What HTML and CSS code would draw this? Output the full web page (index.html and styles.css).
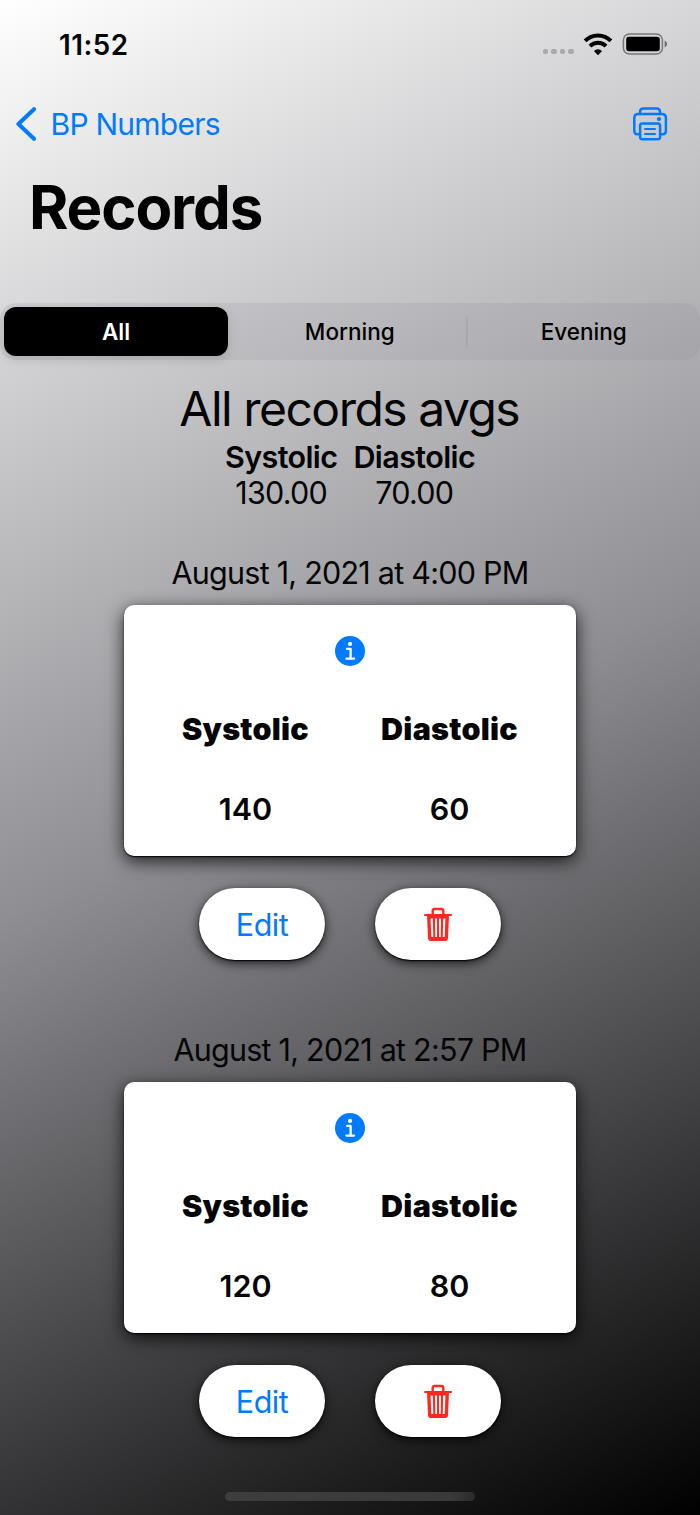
FILE: index.html
```html
<!DOCTYPE html>
<html lang="en">
<head>
<meta charset="utf-8">
<title>Records</title>
<link rel="stylesheet" href="styles.css">
</head>
<body>
<svg class="defs" width="0" height="0" aria-hidden="true">
  <symbol id="trash" viewBox="0 0 30 36">
    <path d="M2 9H28" fill="none" stroke="currentColor" stroke-width="2.2" stroke-linecap="round"/>
    <path d="M9.7 8.5V4.8Q9.7 3 11.6 3H18.4Q20.3 3 20.3 4.8V8.5" fill="none" stroke="currentColor" stroke-width="2.4"/>
    <path fill-rule="evenodd" fill="currentColor" d="M4 9H26L25 32Q24.9 35 22.2 35H7.8Q5.1 35 5 32ZM7.6 12.6L8.3 31H10.3L9.8 12.6ZM12 12.6L12.3 31H14V12.6ZM16 12.6V31H17.7L18 12.6ZM20.2 12.6L19.7 31H21.7L22.4 12.6Z"/>
  </symbol>
  <symbol id="info" viewBox="0 0 30 30">
    <circle cx="15" cy="15" r="15" fill="#007aff"/>
    <circle cx="15" cy="7.9" r="2.1" fill="#fff"/>
    <path d="M12.1 12.9H15.6V22.6M11.5 22.6H19.1" fill="none" stroke="#fff" stroke-width="2.3" stroke-linecap="round" stroke-linejoin="round"/>
  </symbol>
</svg>
<div class="screen">
  <div class="status">
    <span class="time">11:52</span>
    <span class="dots"><i></i><i></i><i></i><i></i></span>
    <svg class="wifi" width="30" height="23" viewBox="0 0 30 23">
      <path d="M2.1 7.9A18 18 0 0 1 27.9 7.9" fill="none" stroke="#000" stroke-width="4"/>
      <path d="M7 13.1A11.4 11.4 0 0 1 23 13.1" fill="none" stroke="#000" stroke-width="3.9"/>
      <path d="M15 22.2L10.9 18Q15 14.4 19.1 18Z"/>
    </svg>
    <svg class="battery" width="46" height="22" viewBox="0 0 46 22">
      <rect x="1.4" y="1" width="39" height="20" rx="6" fill="none" stroke="#77777a" stroke-width="1.5"/>
      <rect x="4.2" y="3.8" width="33.6" height="14.4" rx="2.6"/>
      <path d="M42.7 7.5Q45 8.8 45 11T42.7 14.5Z" fill="#66666a"/>
    </svg>
  </div>
  <div class="nav">
    <svg class="back" width="22" height="36" viewBox="0 0 22 36"><path d="M20 3.2L4.4 18L20 32.8" fill="none" stroke="#007aff" stroke-width="4" stroke-linecap="round" stroke-linejoin="round"/></svg>
    <span class="back-label">BP Numbers</span>
    <svg class="printer" width="36" height="36" viewBox="0 0 36 36" fill="none" stroke="#007aff" stroke-width="2.5" stroke-linecap="round" stroke-linejoin="round">
      <path d="M8 28.2H5.4Q2.3 28.2 2.3 25V12Q2.3 7.9 6.3 7.9H29.9Q33.9 7.9 33.9 12V25Q33.9 28.2 30.8 28.2H28"/>
      <path d="M8 8V6Q8 2.6 11.5 2.6H24.5Q28 2.6 28 6V8"/>
      <rect x="8.1" y="17.4" width="20" height="15.9" rx="2.2"/>
      <path d="M13 22.9H23M13 27.9H23" stroke-width="2"/>
      <circle cx="27" cy="13" r="1.1" fill="#007aff" stroke-width="2"/>
    </svg>
  </div>
  <h1 class="title"><span>Records</span></h1>
  <div class="tabs">
    <div class="tab active"><span>All</span></div>
    <div class="tab"><span>Morning</span></div>
    <div class="tab split"><span>Evening</span></div>
  </div>
  <h2 class="avg-title"><span>All records avgs</span></h2>
  <div class="avgs">
    <div class="avg"><b class="avg-sys">Systolic</b><span class="n-sys">130.00</span></div>
    <div class="avg"><b class="avg-dia">Diastolic</b><span class="n-dia">70.00</span></div>
  </div>
  <div class="record">
    <div class="date"><span>August 1, 2021 at 4:00 PM</span></div>
    <div class="card">
      <svg class="info" width="30" height="30"><use href="#info"/></svg>
      <div class="cols">
        <div class="col sys"><b>Systolic</b><span>140</span></div>
        <div class="col dia"><b>Diastolic</b><span>60</span></div>
      </div>
    </div>
    <div class="actions">
      <div class="pill"><span>Edit</span></div>
      <div class="pill"><svg class="trash" width="30" height="36"><use href="#trash"/></svg></div>
    </div>
  </div>
  <div class="record">
    <div class="date"><span>August 1, 2021 at 2:57 PM</span></div>
    <div class="card">
      <svg class="info" width="30" height="30"><use href="#info"/></svg>
      <div class="cols">
        <div class="col sys"><b>Systolic</b><span>120</span></div>
        <div class="col dia"><b>Diastolic</b><span>80</span></div>
      </div>
    </div>
    <div class="actions">
      <div class="pill"><span>Edit</span></div>
      <div class="pill"><svg class="trash" width="30" height="36"><use href="#trash"/></svg></div>
    </div>
  </div>
  <div class="home"></div>
</div>
</body>
</html>
```
FILE: styles.css
```css
* { box-sizing: border-box; }
body { margin: 0; font-family: Inter, "Liberation Sans", sans-serif; color: #050505; }
svg { display: block; flex: none; }
.defs { position: absolute; }
.screen {
  width: 700px; height: 1515px; overflow: hidden;
  display: flex; flex-direction: column;
  background: linear-gradient(155.2deg, #fff 0%, #8e8e93 50%, #000 100%);
  white-space: nowrap;
}
.status { height: 88px; padding: 0 32px 0 59px; display: flex; align-items: center; flex: none; }
.time { font-size: 27.8px; line-height: 34px; padding-top: 1px; font-weight: 600; letter-spacing: .5px; margin-right: auto; }
.dots { display: flex; gap: 3px; margin: 15px 9px 0 0; }
.dots i { width: 5.6px; height: 5.6px; border-radius: 2px; background: #a9a9ab; }
.wifi { margin-right: 9px; }
.nav { height: 72px; padding: 0 32px 0 14px; display: flex; align-items: center; flex: none; color: #007aff; }
.back { margin-right: 14.5px; }
.back-label { font-size: 30px; letter-spacing: -.75px; margin-right: auto; padding-bottom: 1px; }
.title { margin: 0; height: 143px; padding: 11px 0 0 29px; font-size: 60px; line-height: 72px; font-weight: 700; letter-spacing: -1.1px; color: #000; flex: none; }
.tabs { height: 57px; padding: 4px; border-radius: 16px; background: rgba(118,118,128,.12); display: flex; flex: none; }
.tab { flex: 0 0 231.5px; margin-left: 6px; display: flex; align-items: center; justify-content: center; font-size: 22.5px; font-weight: 450; color: #000; }
.tab.active { flex: 0 0 224px; margin-left: 0; background: #000; color: #fff; font-weight: 600; border-radius: 12px; box-shadow: 0 4px 12px rgba(0,0,0,.12); }
.tab.split { flex: 1; margin-left: 0; padding-left: 6px; background: linear-gradient(rgba(100,100,110,.16), rgba(100,100,110,.16)) 0 50% / 1.5px 32px no-repeat; }
.avg-title { margin: 19px 0 0; height: 59.5px; font-size: 48px; line-height: 60px; font-weight: 400; letter-spacing: -1.5px; padding-right: 1.5px; text-align: center; flex: none; }
.avgs { display: flex; justify-content: center; gap: 16px; height: 75.5px; flex: none; }
.avg { display: flex; flex-direction: column; align-items: center; font-size: 30.5px; line-height: 36.5px; letter-spacing: -.75px; }
.avg b { font-weight: 600; letter-spacing: -.6px; }
.record { height: 477.5px; padding-top: 39px; display: flex; flex-direction: column; align-items: center; flex: none; }
.date { font-size: 30.5px; line-height: 38px; height: 52px; padding-top: 1px; letter-spacing: -.76px; }
.card { width: 452px; height: 251px; border-radius: 10px; background: #fff; box-shadow: 0 1px 1.5px #000, 0 5px 18px rgba(0,0,0,.8); display: flex; flex-direction: column; align-items: center; padding-top: 31px; }
.cols { display: flex; margin: 44px 5px 0 0; }
.col { width: 204px; display: flex; flex-direction: column; align-items: center; gap: 42px; font-size: 30.5px; line-height: 38px; font-weight: 600; }
.col b { font-weight: 900; letter-spacing: .25px; }
.actions { display: flex; gap: 50px; margin-top: 32px; }
.pill { width: 126px; height: 72px; border-radius: 36px; background: #fff; box-shadow: 0 1px 1.5px #000, 0 3px 11px rgba(0,0,0,.75); display: flex; align-items: center; justify-content: center; font-size: 30.5px; letter-spacing: -.5px; color: #007aff; }
.trash { color: #ff281e; }
.record + .record { margin-top: -.5px; }
.home { width: 250px; height: 9px; border-radius: 5px; margin: 23px auto 0; background: linear-gradient(90deg, #3d3d3e, #3a3a3b 90%, #2b2b2c); flex: none; }
```
